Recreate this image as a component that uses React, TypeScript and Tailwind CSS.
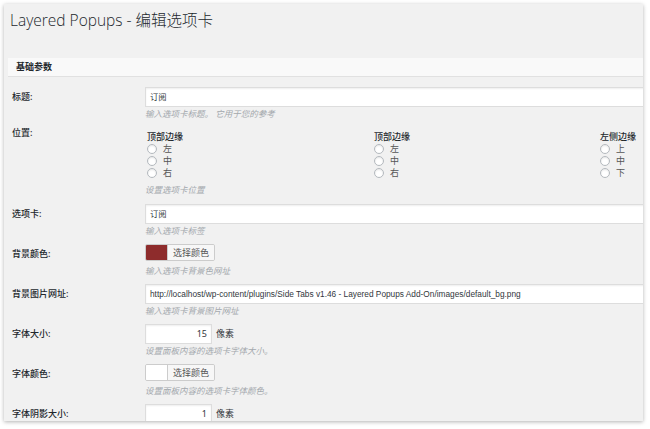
const cjk = "font-['Noto_Sans','Noto_Sans_CJK_SC',sans-serif]";

function Row({
  label,
  desc,
  children,
}: {
  label: string;
  desc: string;
  children: React.ReactNode;
}) {
  return (
    <div className="flex pb-[7px]">
      <div className="w-[133px] shrink-0 text-[9px] leading-[20px] font-medium text-[#23282d]">
        {label}
      </div>
      <div className="flex-1 min-w-0">
        <div className="h-[20px] flex items-start">{children}</div>
        <div className="text-[8.5px] leading-[13px] italic text-[#a3a8ad]">{desc}</div>
      </div>
    </div>
  );
}

function TextInput({ value }: { value: string }) {
  return (
    <div className="w-[510px] shrink-0 h-[20px] bg-white border border-[#dddddd] shadow-[inset_0_1px_2px_rgba(0,0,0,0.07)] px-[4px] text-[8.3px] leading-[18px] text-[#32373c] font-['Liberation_Sans','Noto_Sans_CJK_SC',sans-serif] whitespace-nowrap overflow-hidden">
      {value}
    </div>
  );
}

function NumberInput({ value }: { value: string }) {
  return (
    <div className="flex items-center">
      <div className="w-[67px] h-[20px] bg-white border border-[#dddddd] shadow-[inset_0_1px_2px_rgba(0,0,0,0.07)] px-[4px] text-right text-[9px] leading-[18px] text-[#32373c]">
        {value}
      </div>
      <span className="ml-[4px] text-[9px] text-[#32373c]">像素</span>
    </div>
  );
}

function ColorPicker({ color }: { color: string }) {
  return (
    <div className="flex h-[17px] border border-[#cccccc] rounded-[2px] overflow-hidden">
      <div className="w-[21px] h-full" style={{ backgroundColor: color }} />
      <div className="h-full px-[5px] bg-[#f7f7f7] border-l border-[#cccccc] text-[9px] leading-[15px] text-[#555555]">
        选择颜色
      </div>
    </div>
  );
}

function Radio({ text }: { text: string }) {
  return (
    <div className="flex items-center h-[12px]">
      <span className="w-[10px] h-[10px] rounded-full bg-white border border-[#b4b9be] shadow-[inset_0_1px_2px_rgba(0,0,0,0.1)]" />
      <span className="ml-[6px] text-[9px] text-[#555555]">{text}</span>
    </div>
  );
}

function RadioGroup({ title, items }: { title: string; items: string[] }) {
  return (
    <div>
      <div className="text-[9px] leading-[12px] font-medium text-[#23282d]">{title}</div>
      {items.map((t) => (
        <Radio key={t} text={t} />
      ))}
    </div>
  );
}

export default function App() {
  return (
    <div className={`w-[650px] h-[429px] bg-white pl-[4px] pt-[4px] ${cjk}`}>
      <div className="w-[639px] h-[417px] bg-[#f1f1f1] overflow-hidden shadow-[0_1px_4px_rgba(0,0,0,0.3)]">
        <h1 className="pt-[6px] px-[6px] text-[15.5px] leading-[20px] font-light text-[#23282d] font-['Open_Sans','Noto_Sans_CJK_SC',sans-serif]">
          Layered Popups - 编辑选项卡
        </h1>

        <div className="mt-[28px] ml-[4px] h-[19px] bg-[#f9f9f9] border-b border-[#e1e1e1] pl-[8px] text-[9px] leading-[18px] font-bold text-[#23282d]">
          基础参数
        </div>

        <div className="pt-[10px] pl-[8px]">
          <Row label="标题:" desc="输入选项卡标题。 它用于您的参考">
            <TextInput value="订阅" />
          </Row>

          <div className="flex pb-[8px]">
            <div className="w-[133px] shrink-0 text-[9px] leading-[12px] font-medium text-[#23282d]">
              位置:
            </div>
            <div className="flex-1 min-w-0 pt-[4px]">
              <div className="flex">
                <div className="w-[229px] pl-[2px]">
                  <RadioGroup title="顶部边缘" items={["左", "中", "右"]} />
                </div>
                <div className="w-[226px]">
                  <RadioGroup title="顶部边缘" items={["左", "中", "右"]} />
                </div>
                <div>
                  <RadioGroup title="左侧边缘" items={["上", "中", "下"]} />
                </div>
              </div>
              <div className="mt-[4px] text-[8.5px] leading-[13px] italic text-[#a3a8ad]">设置选项卡位置</div>
            </div>
          </div>

          <Row label="选项卡:" desc="输入选项卡标签">
            <TextInput value="订阅" />
          </Row>

          <Row label="背景颜色:" desc="输入选项卡背景色网址">
            <ColorPicker color="#8e2c2c" />
          </Row>

          <Row label="背景图片网址:" desc="输入选项卡背景图片网址">
            <TextInput value="http://localhost/wp-content/plugins/Side Tabs v1.46 - Layered Popups Add-On/images/default_bg.png" />
          </Row>

          <Row label="字体大小:" desc="设置面板内容的选项卡字体大小。">
            <NumberInput value="15" />
          </Row>

          <Row label="字体颜色:" desc="设置面板内容的选项卡字体颜色。">
            <ColorPicker color="#ffffff" />
          </Row>

          <Row label="字体阴影大小:" desc="">
            <NumberInput value="1" />
          </Row>
        </div>
      </div>
    </div>
  );
}
